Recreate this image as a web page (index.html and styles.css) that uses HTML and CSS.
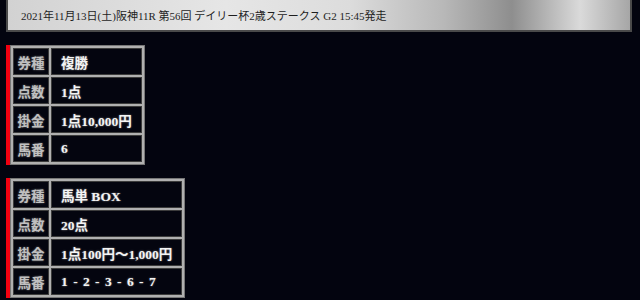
FILE: index.html
```html
<!DOCTYPE html>
<html lang="ja">
<head>
<meta charset="utf-8">
<link rel="stylesheet" href="styles.css">
</head>
<body>
<div class="header">2021年11月13日(土)阪神11R 第56回 デイリー杯2歳ステークス G2 15:45発走</div>
<div class="bets">
  <div class="bet">
    <table class="bet-table">
      <tr><td class="label">券種</td><td class="value">複勝</td></tr>
      <tr><td class="label">点数</td><td class="value">1点</td></tr>
      <tr><td class="label">掛金</td><td class="value">1点10,000円</td></tr>
      <tr><td class="label">馬番</td><td class="value">6</td></tr>
    </table>
  </div>
  <div class="bet">
    <table class="bet-table">
      <tr><td class="label">券種</td><td class="value">馬単 BOX</td></tr>
      <tr><td class="label">点数</td><td class="value">20点</td></tr>
      <tr><td class="label">掛金</td><td class="value">1点100円～1,000円</td></tr>
      <tr><td class="label">馬番</td><td class="value nums">1 - 2 - 3 - 6 - 7</td></tr>
    </table>
  </div>
</div>
</body>
</html>
```
FILE: styles.css
```css
html, body {
  margin: 0;
  padding: 0;
  background: #03040f;
}
body {
  padding: 0 8px 0 6px;
  font-family: "Liberation Serif", "Noto Sans CJK JP", serif;
}
.header {
  box-sizing: border-box;
  height: 32px;
  border: 2px solid #4a4a4a;
  border-top: none;
  padding-left: 13px;
  line-height: 32px;
  font-size: 11px;
  color: #1e1e1e;
  background: linear-gradient(to right, #d2d2d2 0%, #e6e6e6 35%, #dcdcdc 55%, #b8b8b8 70%, #8e8e8e 81%, #dadada 92%, #a6a6a6 100%);
  white-space: nowrap;
}
.bets {
  display: flex;
  flex-direction: column;
  align-items: flex-start;
  gap: 13px;
  margin-top: 13px;
}
.bet {
  border-left: 4px solid #f20010;
}
.bet-table {
  border-collapse: separate;
  border-spacing: 2px;
  border: 1px solid #777;
  background: #b0b0b0;
  font-size: 13.5px;
  font-weight: bold;
}
.bet-table td {
  box-sizing: border-box;
  height: 27px;
  background: #04050f;
  border: 1px solid #3c3c3c;
  white-space: nowrap;
  padding: 0;
}
.label {
  width: 36px;
  text-align: center;
  color: #c0c0c0;
  text-shadow: 0 0 2px #777;
}
.value {
  padding: 0 9px 0 9px !important;
  color: #f4f4f4;
  text-shadow: 0 0 2px #888;
}
.nums {
  word-spacing: 2px;
}
```
